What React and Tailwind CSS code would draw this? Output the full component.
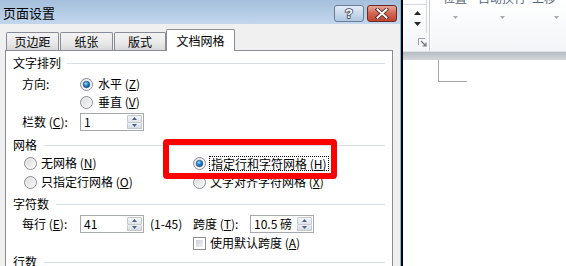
import React from "react";

function Radio({ checked }) {
  return (
    <svg width="13" height="13" viewBox="0 0 13 13" className="shrink-0">
      <defs>
        <linearGradient id="rg" x1="0" y1="0" x2="1" y2="1">
          <stop offset="0" stopColor="#d4d4d4" />
          <stop offset="1" stopColor="#ffffff" />
        </linearGradient>
        <radialGradient id="rb" cx="0.4" cy="0.35" r="0.7">
          <stop offset="0" stopColor="#9fe0ff" />
          <stop offset="0.45" stopColor="#2a8ad8" />
          <stop offset="1" stopColor="#0b3f80" />
        </radialGradient>
      </defs>
      <circle cx="6.5" cy="6.5" r="6" fill="url(#rg)" stroke="#8a8f96" strokeWidth="1" />
      <circle cx="6.5" cy="6.5" r="4.6" fill="none" stroke="#f4f4f4" strokeWidth="0.8" />
      {checked && <circle cx="6.5" cy="6.5" r="3.3" fill="url(#rb)" stroke="#15406e" strokeWidth="0.5" />}
    </svg>
  );
}

function Spin({ value, w = 64 }) {
  return (
    <div className="flex h-[18px] border border-[#a5a8ae] bg-white" style={{ width: w }}>
      <div className="flex-1 pl-[3px] leading-[16px] text-[12px]">{value}</div>
      <div className="w-[15px] mr-[1px] my-[1px] flex flex-col">
        <div className="flex-1 flex items-center justify-center bg-gradient-to-b from-[#f6f7f9] to-[#dfe3e8] border border-[#c4c9d0] rounded-[1px]">
          <svg width="5" height="3"><path d="M0 3 L2.5 0 L5 3 Z" fill="#4b5f85" /></svg>
        </div>
        <div className="flex-1 flex items-center justify-center bg-gradient-to-b from-[#eef1f4] to-[#d6dbe2] border border-[#c4c9d0] border-t-0 rounded-[1px]">
          <svg width="5" height="3"><path d="M0 0 L2.5 3 L5 0 Z" fill="#4b5f85" /></svg>
        </div>
      </div>
    </div>
  );
}

function Heading({ children, gap }) {
  return (
    <div className="flex items-center h-[18px] pl-[7px] pr-[7px]">
      <span className="leading-[18px]">{children}</span>
      <div className="flex-1 h-px bg-[#d5dfe5]" style={{ marginLeft: gap }} />
    </div>
  );
}

function Tab({ children, w, ml = 0 }) {
  return (
    <div
      className="h-[18px] border border-b-0 border-[#898c95] bg-gradient-to-b from-[#f3f3f3] via-[#ebebeb] to-[#d9d9d9] flex items-center justify-center leading-[16px] rounded-t-[2px]"
      style={{ width: w, marginLeft: ml }}
    >
      {children}
    </div>
  );
}

export default function App() {
  return (
    <div className="w-[566px] h-[266px] overflow-hidden flex relative bg-white text-black text-[12px] font-['Noto_Sans_CJK_SC','Noto_Sans',sans-serif]">
      {/* Dialog */}
      <div className="w-[403px] h-full flex shrink-0">
        <div className="w-[400px] h-full flex flex-col bg-[#f0f0f0]">
          {/* Title bar */}
          <div className="h-[24px] shrink-0 flex items-center bg-gradient-to-b from-[#a5c0dd] to-[#c2d7ed]">
            <span className="ml-[3px] text-[13px] leading-[16px] mt-[2px]">页面设置</span>
            <div className="ml-auto flex items-center gap-[3px] mr-[3px] mt-[2px]">
              <div className="w-[30px] h-[17px] rounded-[3px] border border-[#6c7d95] bg-gradient-to-b from-[#e3ecf6] via-[#c9daec] to-[#afc6e0] flex items-center justify-center">
                <svg width="12" height="14" viewBox="0 0 12 14">
                  <text x="6" y="12" textAnchor="middle" fontSize="13" fontWeight="700" fontFamily="Liberation Sans, sans-serif" fill="#ffffff" stroke="#3a4250" strokeWidth="1.6" paintOrder="stroke">?</text>
                </svg>
              </div>
              <div className="w-[30px] h-[17px] rounded-[3px] border border-[#6b2b25] bg-gradient-to-b from-[#e6a596] via-[#d06650] to-[#c0432f] flex items-center justify-center">
                <svg width="14" height="11" viewBox="0 0 14 11">
                  <path d="M2.5 1.5 L11.5 9.5 M11.5 1.5 L2.5 9.5" stroke="#4a1d18" strokeWidth="3.6" strokeLinecap="square" />
                  <path d="M2.5 1.5 L11.5 9.5 M11.5 1.5 L2.5 9.5" stroke="#ffffff" strokeWidth="2" strokeLinecap="square" />
                </svg>
              </div>
            </div>
          </div>

          {/* Body */}
          <div className="flex-1 flex flex-col pt-[5px] pl-[5px] pr-[7px]">
            {/* Tabs */}
            <div className="flex items-end h-[21px] pl-[1px] shrink-0">
              <Tab w={53}>页边距</Tab>
              <Tab w={53} ml={1}>纸张</Tab>
              <Tab w={52} ml={1}>版式</Tab>
              <div className="w-[69px] h-[22px] mb-[-1px] relative z-10 bg-white border border-b-0 border-[#898c95] flex items-center justify-center leading-[16px] rounded-t-[2px]">
                文档网格
              </div>
            </div>

            {/* Panel */}
            <div className="flex-1 border border-[#898c95] bg-white flex flex-col pt-[3px]">
              <Heading gap={6}>文字排列</Heading>

              <div className="flex items-center h-[18px] mt-[3px] pl-[16px]">
                <span className="w-[58px]">方向:</span>
                <Radio checked />
                <span className="ml-[5px]">水平 (<u>Z</u>)</span>
              </div>
              <div className="flex items-center h-[18px] pl-[74px]">
                <Radio />
                <span className="ml-[5px]">垂直 (<u>V</u>)</span>
              </div>
              <div className="flex items-center h-[18px] mt-[2px] pl-[16px]">
                <span className="w-[58px]">栏数 (<u>C</u>):</span>
                <Spin value="1" />
              </div>

              <div className="mt-[5px]">
                <Heading gap={7}>网格</Heading>
              </div>

              <div className="flex items-center h-[18px] pl-[18px]">
                <div className="w-[169px] flex items-center">
                  <Radio />
                  <span className="ml-[4px]">无网格 (<u>N</u>)</span>
                </div>
                <Radio checked />
                <span className="ml-[3px] border border-dotted border-black px-[1px] leading-[13px]">指定行和字符网格 (<u>H</u>)</span>
              </div>
              <div className="flex items-center h-[18px] mt-[1px] pl-[18px]">
                <div className="w-[169px] flex items-center">
                  <Radio />
                  <span className="ml-[4px]">只指定行网格 (<u>O</u>)</span>
                </div>
                <Radio />
                <span className="ml-[4px]">文字对齐字符网格 (<u>X</u>)</span>
              </div>

              <div className="mt-[4px]">
                <Heading gap={7}>字符数</Heading>
              </div>

              <div className="flex items-center h-[18px] mt-[2px] pl-[16px]">
                <span className="w-[58px]">每行 (<u>E</u>):</span>
                <Spin value="41" />
                <span className="ml-[6px] w-[43px]">(1-45)</span>
                <span className="w-[57px]">跨度 (<u>T</u>):</span>
                <Spin value="10.5 磅" />
              </div>
              <div className="flex items-center h-[18px] mt-[1px] pl-[187px]">
                <div className="w-[13px] h-[13px] border border-[#8e8f8f] bg-white p-[2px]">
                  <div className="w-full h-full bg-gradient-to-br from-[#cbcfd5] to-[#f4f4f4]" />
                </div>
                <span className="ml-[4px]">使用默认跨度 (<u>A</u>)</span>
              </div>
              <div className="mt-[1px]">
                <Heading gap={7}>行数</Heading>
              </div>
            </div>
          </div>
        </div>
        <div className="w-[1px] h-full bg-[#74b9e8]" />
        <div className="w-[2px] h-full bg-black" />
      </div>

      {/* Right: Word ribbon and page */}
      <div className="flex-1 h-full flex flex-col">
        <div className="h-[52px] shrink-0 flex bg-gradient-to-b from-[#ffffff] to-[#f3f5f8] border-b border-[#dfe3e8]">
          <div className="w-[24px] h-[33px] border-r border-[#d3d8de] flex flex-col items-center relative">
            <div className="w-full h-[5px] border-b border-[#d3d8de]" />
            <svg width="7" height="4" className="mt-[6px] ml-[6px]"><path d="M0 4 L3.5 0 L7 4 Z" fill="#262626" /></svg>
            <svg width="7" height="4" className="mt-[7px] ml-[6px]"><path d="M0 0 L3.5 4 L7 0 Z" fill="#262626" /></svg>
            <svg width="9" height="9" viewBox="0 0 9 9" className="absolute left-[15px] top-[38px]">
              <path d="M0.5 7 V0.5 H7" fill="none" stroke="#9aa0a8" />
              <path d="M3 3 L8 8 M8 4.5 V8 H4.5" fill="none" stroke="#6e747c" strokeWidth="1.2" />
            </svg>
          </div>
          <div className="w-px ml-[2px] bg-[#c9ced4]" />
          <div className="w-px bg-white" />
          <div className="flex ml-[12px] text-[#58677a]">
            <div className="w-[24px] flex flex-col items-center">
              <span className="mt-[-9px] leading-[14px] whitespace-nowrap">位置</span>
              <svg width="5" height="3" className="mt-[11px]"><path d="M0 0 L2.5 3 L5 0 Z" fill="#a3a9b1" /></svg>
            </div>
            <div className="w-[48px] ml-[11px] flex flex-col items-center">
              <span className="mt-[-9px] leading-[14px] whitespace-nowrap">自动换行</span>
              <svg width="5" height="3" className="mt-[11px]"><path d="M0 0 L2.5 3 L5 0 Z" fill="#a3a9b1" /></svg>
            </div>
            <div className="w-[48px] ml-[6px] flex flex-col items-center">
              <span className="mt-[-9px] leading-[14px] whitespace-nowrap">上移一层</span>
              <svg width="5" height="3" className="mt-[11px]"><path d="M0 0 L2.5 3 L5 0 Z" fill="#a3a9b1" /></svg>
            </div>
          </div>
        </div>
        <div className="h-[8px] shrink-0 bg-gradient-to-b from-[#b7bcc3] to-[#d2d6db]" />
        <div className="flex-1 bg-white">
          <div className="ml-[35px] w-[29px] h-[22px] border-l border-b border-[#a6a6a6]" />
        </div>
      </div>

      {/* Red highlight box */}
      <div className="absolute left-[163px] top-[139px] w-[174px] h-[40px] border-[6px] border-[#ff0000] rounded-[4px]" />
    </div>
  );
}
